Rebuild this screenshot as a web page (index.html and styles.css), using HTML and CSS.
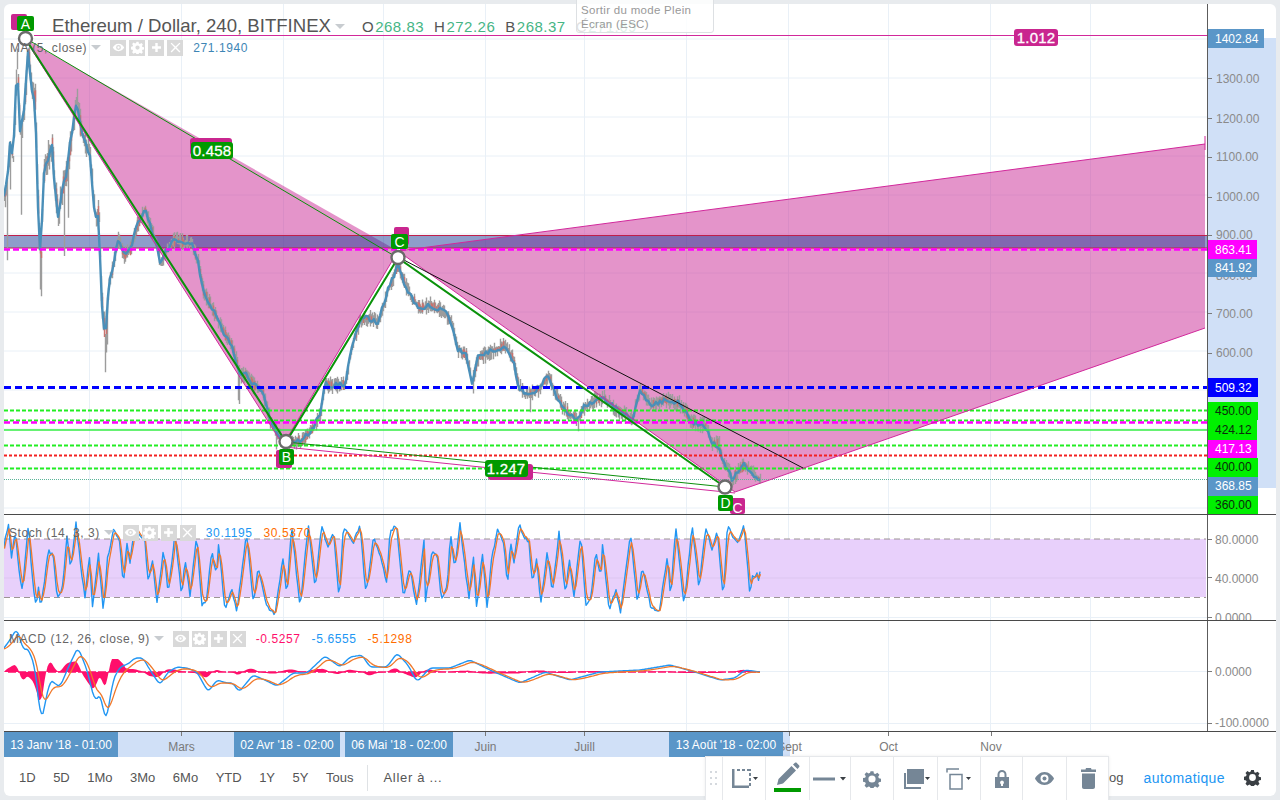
FILE: index.html
```html
<!DOCTYPE html>
<html lang="fr">
<head>
<meta charset="utf-8">
<title>Ethereum / Dollar</title>
<link rel="stylesheet" href="styles.css">
</head>
<body>
<svg class="defs" width="0" height="0" aria-hidden="true">
  <symbol id="i-eye" viewBox="0 0 16 16"><path fill="#fff" d="M8 3.5C4.6 3.5 2 6 1 8c1 2 3.6 4.500 7 4.500S14 10 15 8c-1-2-3.600-4.500-7-4.500zm0 7.500a3 3 0 1 1 0-6 3 3 0 0 1 0 6z"/><circle cx="8" cy="8" r="1.400" fill="#fff"/></symbol>
  <symbol id="i-gear" viewBox="0 0 16 16"><path fill="#fff" fill-rule="evenodd" d="M6.700 1h2.600l.4 2 1.300.6 1.800-1.100 1.800 1.800-1.100 1.800.6 1.300 2 .4v2.600l-2 .4-.6 1.300 1.100 1.800-1.800 1.800-1.800-1.100-1.300.6-.4 2H6.700l-.4-2-1.300-.6-1.800 1.100-1.800-1.800 1.100-1.800-.6-1.300-2-.4V7.200l2-.4.6-1.300-1.100-1.800 1.800-1.800 1.800 1.100 1.300-.6zM8 5.500a2.600 2.600 0 1 0 0 5.200 2.600 2.600 0 0 0 0-5.200z"/></symbol>
  <symbol id="i-plus" viewBox="0 0 16 16"><path fill="#fff" d="M6.500 2.500h3v4h4v3h-4v4h-3v-4h-4v-3h4z"/></symbol>
  <symbol id="i-x" viewBox="0 0 16 16"><path fill="#fff" d="M3.200 2 8 6.800 12.800 2 14 3.200 9.200 8 14 12.800 12.800 14 8 9.200 3.200 14 2 12.800 6.800 8 2 3.200z"/></symbol>
</svg>

<main class="app">
  <section class="row row-main">
    <div class="plot">
      <svg class="canvas" viewBox="4 4 1203 510" width="1203" height="510">
        <path class="grid" d="M4 39H1207M4 78H1207M4 117H1207M4 156H1207M4 195H1207M4 234H1207M4 273H1207M4 312H1207M4 351H1207M4 390H1207M4 429H1207M4 468H1207M4 508H1207M89.500 4V514M181.500 4V514M283.500 4V514M383.500 4V514M485.500 4V514M584.500 4V514M686.500 4V514M788.500 4V514M888.500 4V514M990.500 4V514M1090.500 4V514"/>
        <polygon class="zone" points="25,39 283,445 398,251"/>
        <polygon class="zone" points="398,251 1205,144 1205,328 735,492"/>
        <path class="pink-line" d="M1205 136V150"/>
        <rect class="band" x="4" y="235" width="1203" height="13"/>
        <path class="band-edge" d="M4 235.500H1207M4 248H1207"/>

        <path id="wicks" class="wicks"/>
        <path id="wicks-red" class="wicks-red"/>
        <path id="ma" class="ma"/>

        <path class="h-magenta" d="M4 249.500H1207"/>
        <path class="h-blue" d="M4 387.500H1207"/>
        <path class="h-green" d="M4 410.500H1207M4 420.500H1207M4 445.500H1207M4 468.500H1207"/>
        <path class="h-magenta" d="M4 422.500H1207"/>
        <path class="h-solid" d="M4 430H1207"/>
        <path class="h-red" d="M4 455.500H1207"/>
        <path class="h-dot" d="M4 479.500H1207"/>

        <path class="pink-line" d="M34 35.500H1207M25 39L283 445L398 251L735 492L1205 328M398 251L1205 144M285 447L735 493"/>
        <path class="black-line" d="M400 258L803 468"/>
        <path class="green-thin" d="M25 38L398 258M286 442L725 487"/>
        <path class="green-thick" d="M25 38L286 442L398 258L725 487"/>

        <g class="tag-pink">
          <rect x="11" y="14" width="16" height="16" rx="2"/>
          <rect x="394" y="227" width="15" height="18" rx="2"/>
          <rect x="276" y="450" width="16" height="18" rx="2"/>
          <rect x="730" y="498" width="15" height="16" rx="2"/>
          <rect x="190" y="138" width="42" height="17" rx="3"/>
          <rect x="488" y="464" width="45" height="16" rx="3"/>
          <rect x="1014" y="29" width="44" height="17" rx="3"/>
        </g>
        <g class="tag-green">
          <rect x="17" y="16" width="17" height="15" rx="2"/>
          <rect x="391" y="234" width="17" height="15" rx="2"/>
          <rect x="279" y="449" width="15" height="16" rx="2"/>
          <rect x="718" y="495" width="15" height="16" rx="2"/>
          <rect x="191" y="142" width="42" height="17" rx="3"/>
          <rect x="485" y="460" width="43" height="17" rx="3"/>
        </g>
        <g class="tag-text">
          <text x="25.500" y="29">A</text>
          <text x="399.500" y="247">C</text>
          <text x="286.500" y="462">B</text>
          <text x="725.500" y="508">D</text>
          <text x="737.500" y="513">C</text>
        </g>
        <g class="tag-num">
          <text x="212" y="156">0.458</text>
          <text x="506" y="474">1.247</text>
          <text x="1036" y="43">1.012</text>
        </g>
        <g class="node">
          <circle cx="25.500" cy="38.500" r="6.500"/>
          <circle cx="286" cy="441.500" r="6.500"/>
          <circle cx="398" cy="257.500" r="6.500"/>
          <circle cx="725" cy="487" r="6.500"/>
        </g>
      </svg>

      <div class="legend">
        <div class="title-row">
          <span class="title">Ethereum / Dollar, 240, BITFINEX</span>
          <span class="caret"></span>
          <span class="ohlc"><b>O</b><i>268.83</i></span>
          <span class="ohlc"><b>H</b><i>272.26</i></span>
          <span class="ohlc"><b>B</b><i>268.37</i></span>
          <span class="ohlc"><b>C</b><i>271.69</i></span>
        </div>
        <div class="study study-ma">
          <span class="study-name">MA (5, close)</span>
          <span class="caret small"></span>
          <span class="tools">
            <span class="tool"><svg width="13" height="13"><use href="#i-eye"/></svg></span>
            <span class="tool"><svg width="13" height="13"><use href="#i-gear"/></svg></span>
            <span class="tool"><svg width="13" height="13"><use href="#i-plus"/></svg></span>
            <span class="tool"><svg width="13" height="13"><use href="#i-x"/></svg></span>
          </span>
          <span class="val val-ma">271.1940</span>
        </div>
      </div>
    </div>
    <svg class="axis" viewBox="1208 4 68 510" width="68" height="510">
      <rect class="axis-fill" x="1208" y="38" width="68" height="450"/>
      <path class="tick" d="M1208 78.500h4M1208 118.500h4M1208 157.500h4M1208 197.500h4M1208 235.500h4M1208 275.500h4M1208 313.500h4M1208 353.500h4"/>
      <g class="axis-text">
        <text x="1216" y="83">1300.00</text>
        <text x="1216" y="123">1200.00</text>
        <text x="1216" y="161">1100.00</text>
        <text x="1216" y="201">1000.00</text>
        <text x="1216" y="239">900.00</text>
        <text x="1216" y="280">800.00</text>
        <text x="1216" y="318">700.00</text>
        <text x="1216" y="357">600.00</text>
      </g>
      <g class="axis-tag">
        <rect class="c-steel" x="1208" y="29" width="56" height="19"/><text class="on-dark" x="1215" y="43">1402.84</text>
        <rect class="c-magenta" x="1208" y="240" width="49" height="19"/><text class="on-dark" x="1215" y="254">863.41</text>
        <rect class="c-steel" x="1208" y="259" width="49" height="18"/><text class="on-dark" x="1215" y="272">841.92</text>
        <rect class="c-blue" x="1208" y="378" width="50" height="19"/><text class="on-dark" x="1215" y="392">509.32</text>
        <rect class="c-lime" x="1208" y="402" width="50" height="18"/><text class="on-lime" x="1215" y="415">450.00</text>
        <rect class="c-lime" x="1208" y="420" width="49" height="20"/><text class="on-lime" x="1215" y="434">424.12</text>
        <rect class="c-magenta" x="1208" y="440" width="49" height="18"/><text class="on-dark" x="1215" y="453">417.13</text>
        <rect class="c-lime" x="1208" y="458" width="50" height="19"/><text class="on-lime" x="1215" y="471">400.00</text>
        <rect class="c-steel" x="1208" y="477" width="50" height="19"/><text class="on-dark" x="1215" y="490">368.85</text>
        <rect class="c-lime" x="1208" y="496" width="50" height="18"/><text class="on-lime" x="1215" y="509">360.00</text>
      </g>
    </svg>
  </section>

  <section class="row row-stoch">
    <div class="plot">
      <svg class="canvas" viewBox="4 515 1203 105" width="1203" height="105">
        <path class="grid" d="M4 617.500H1207M89.500 515V620M181.500 515V620M283.500 515V620M383.500 515V620M485.500 515V620M584.500 515V620M686.500 515V620M788.500 515V620M888.500 515V620M990.500 515V620M1090.500 515V620"/>
        <rect class="stoch-band" x="4" y="539" width="1202" height="58"/>
        <path class="stoch-mid" d="M4 578H1206"/>
        <path class="stoch-dash" d="M4 539H1206M4 597.500H1206"/>
        <path id="st-k" class="line-blue"/>
        <path id="st-d" class="line-orange"/>
      </svg>
      <div class="legend">
        <div class="study study-st">
          <span class="study-name">Stoch (14, 3, 3)</span>
          <span class="caret small"></span>
          <span class="tools">
            <span class="tool"><svg width="13" height="13"><use href="#i-eye"/></svg></span>
            <span class="tool"><svg width="13" height="13"><use href="#i-gear"/></svg></span>
            <span class="tool"><svg width="13" height="13"><use href="#i-plus"/></svg></span>
            <span class="tool"><svg width="13" height="13"><use href="#i-x"/></svg></span>
          </span>
          <span class="val val-blue">30.1195</span>
          <span class="val val-orange">30.5370</span>
        </div>
      </div>
    </div>
    <svg class="axis" viewBox="1208 515 68 105" width="68" height="105">
      <path class="tick" d="M1208 539.500h4M1208 577.500h4M1208 617.500h4"/>
      <g class="axis-text">
        <text x="1215" y="544">80.0000</text>
        <text x="1215" y="583">40.0000</text>
        <text x="1215" y="622">0.0000</text>
      </g>
    </svg>
  </section>

  <section class="row row-macd">
    <div class="plot">
      <svg class="canvas" viewBox="4 621 1203 110" width="1203" height="110">
        <path class="grid" d="M4 671.500H1207M4 723.500H1207M89.500 621V731M181.500 621V731M283.500 621V731M383.500 621V731M485.500 621V731M584.500 621V731M686.500 621V731M788.500 621V731M888.500 621V731M990.500 621V731M1090.500 621V731"/>
        <path id="hist" class="hist"/>
        <path id="mc-base" class="hist-base"/>
        <path id="mc-a" class="line-blue"/>
        <path id="mc-b" class="line-orange"/>
      </svg>
      <div class="legend">
        <div class="study study-mc">
          <span class="study-name">MACD (12, 26, close, 9)</span>
          <span class="caret small"></span>
          <span class="tools">
            <span class="tool"><svg width="13" height="13"><use href="#i-eye"/></svg></span>
            <span class="tool"><svg width="13" height="13"><use href="#i-gear"/></svg></span>
            <span class="tool"><svg width="13" height="13"><use href="#i-plus"/></svg></span>
            <span class="tool"><svg width="13" height="13"><use href="#i-x"/></svg></span>
          </span>
          <span class="val val-pink">-0.5257</span>
          <span class="val val-blue">-5.6555</span>
          <span class="val val-orange">-5.1298</span>
        </div>
      </div>
    </div>
    <svg class="axis" viewBox="1208 621 68 110" width="68" height="110">
      <path class="tick" d="M1208 671.500h4M1208 723.500h4"/>
      <g class="axis-text">
        <text x="1215" y="676">0.0000</text>
        <text x="1215" y="727">-100.0000</text>
      </g>
    </svg>
  </section>

  <svg class="timeaxis" viewBox="4 732 1272 25" width="1272" height="25">
    <rect class="axis-fill" x="4" y="732" width="786" height="25"/>
    <path class="tick-v" d="M181.500 732v4M485.500 732v4M584.500 732v4M789.500 732v4M888.500 732v4M991.500 732v4"/>
    <g class="time-text">
      <text x="181.500" y="751">Mars</text>
      <text x="485.500" y="751">Juin</text>
      <text x="584.500" y="751">Juill</text>
      <text x="789.500" y="751">Sept</text>
      <text x="888.500" y="751">Oct</text>
      <text x="991" y="751">Nov</text>
    </g>
    <g class="time-tag">
      <rect x="4" y="732" width="114" height="25"/><text x="61" y="749">13 Janv '18 - 01:00</text>
      <rect x="234" y="732" width="106" height="25"/><text x="287" y="749">02 Avr '18 - 02:00</text>
      <rect x="345" y="732" width="108" height="25"/><text x="399" y="749">06 Mai '18 - 02:00</text>
      <rect x="669" y="732" width="114" height="25"/><text x="726" y="749">13 Août '18 - 02:00</text>
    </g>
  </svg>

  <footer class="bar">
    <nav class="ranges">
      <span>1D</span><span>5D</span><span>1Mo</span><span>3Mo</span><span>6Mo</span><span>YTD</span><span>1Y</span><span>5Y</span><span>Tous</span>
    </nav>
    <span class="goto">Aller à ...</span>
    <div class="bar-right">
      <span class="log">Log</span>
      <span class="auto">automatique</span>
      <svg class="bar-gear" width="17" height="17" viewBox="0 0 16 16"><path fill="#3a3f44" fill-rule="evenodd" d="M6.700 1h2.600l.4 2 1.300.6 1.800-1.100 1.800 1.800-1.100 1.800.6 1.300 2 .4v2.600l-2 .4-.6 1.300 1.100 1.800-1.800 1.800-1.800-1.100-1.300.6-.4 2H6.700l-.4-2-1.300-.6-1.800 1.100-1.800-1.800 1.100-1.800-.6-1.300-2-.4V7.200l2-.4.6-1.300-1.100-1.800 1.800-1.800 1.800 1.100 1.300-.6zM8 4.800a3.200 3.200 0 1 0 0 6.400 3.200 3.200 0 0 0 0-6.400z"/></svg>
    </div>
  </footer>
</main>

<aside class="tooltip">Sortir du mode Plein<br>Écran (ESC)</aside>

<aside class="toolbar">
  <div class="tb tb-grip"><svg width="8" height="18"><path fill="#d5d9de" d="M0 1h2v2H0zM5 1h2v2H5zM0 7h2v2H0zM5 7h2v2H5zM0 13h2v2H0zM5 13h2v2H5z"/></svg></div>
  <div class="tb tb-43"><svg width="28" height="24" viewBox="0 0 28 24"><path fill="#758696" d="M2 2h2.500v16.500H19V21H2z"/><path fill="#758696" d="M7 2h3v2H7zM12 2h3v2h-3zM17 2h4v2h-4zM19 6h2v3h-2zM19 11h2v3h-2zM19 16h2v3h-2z"/><path fill="#3a3f44" d="M23 10h5l-2.500 3z"/></svg></div>
  <div class="tb tb-44 tb-active"><svg width="24" height="24" viewBox="0 0 24 24"><path fill="#758696" d="M1 23l1.500-6L15.500 4l4.500 4.500L7 21.500zM17 2.500 19 .8c.5-.4 1.200-.4 1.600 0l2.600 2.600c.4.400.4 1.100 0 1.500L21.500 7z"/></svg></div>
  <div class="tb tb-41"><svg width="34" height="10" viewBox="0 0 34 10"><path fill="#758696" d="M0 3.500h22v3H0z"/><path fill="#3a3f44" d="M27 3h6l-3 3.500z"/></svg></div>
  <div class="tb tb-43"><svg width="18" height="18" viewBox="0 0 16 16"><path fill="#758696" fill-rule="evenodd" d="M6.700 1h2.600l.4 2 1.300.6 1.800-1.100 1.800 1.800-1.100 1.800.6 1.300 2 .4v2.600l-2 .4-.6 1.300 1.100 1.800-1.800 1.800-1.800-1.100-1.300.6-.4 2H6.700l-.4-2-1.300-.6-1.800 1.100-1.800-1.800 1.100-1.800-.6-1.300-2-.4V7.200l2-.4.6-1.300-1.100-1.800 1.800-1.800 1.800 1.100 1.300-.6zM8 4.800a3.200 3.200 0 1 0 0 6.400 3.200 3.200 0 0 0 0-6.400z"/></svg></div>
  <div class="tb tb-44"><svg width="28" height="22" viewBox="0 0 28 22"><path fill="#758696" d="M5 1h17v15H5z"/><path fill="#758696" d="M2 5h2v14h15v2H2z"/><path fill="#3a3f44" d="M23 9h5l-2.500 3z"/></svg></div>
  <div class="tb tb-43"><svg width="26" height="22" viewBox="0 0 26 22"><path fill="none" stroke="#758696" stroke-width="1.500" d="M4 6.500h12v14.500H4zM1 4.500V1h12"/><path fill="#3a3f44" d="M20 9h5l-2.500 3z"/></svg></div>
  <div class="tb tb-42"><svg width="16" height="20" viewBox="0 0 16 20"><path fill="#758696" fill-rule="evenodd" d="M3.500 8V5.500a4.500 4.500 0 0 1 9 0V8H15v11H1V8zm2 0h5V5.500a2.500 2.500 0 0 0-5 0zM8 11.500a2 2 0 0 0-1 3.700V17h2v-1.800a2 2 0 0 0-1-3.700z"/></svg></div>
  <div class="tb tb-44"><svg width="19" height="13" viewBox="0 0 19 13"><path fill="#758696" fill-rule="evenodd" d="M9.500 0C5 0 1.500 3.500 0 6.500 1.500 9.500 5 13 9.500 13s8-3.500 9.500-6.500C17.500 3.500 14 0 9.500 0zm0 2.500a4 4 0 1 1 0 8 4 4 0 0 1 0-8z"/><circle cx="9.500" cy="6.500" r="2" fill="#758696"/></svg></div>
  <div class="tb tb-42 tb-last"><svg width="15" height="21" viewBox="0 0 15 21"><path fill="#758696" d="M5 0h5l.5 1.500H15V4H0V1.500h4.500zM1 5.500h13V19c0 1-.8 2-2 2H3c-1.200 0-2-1-2-2z"/></svg></div>
</aside>

<script src="chart.js"></script>
</body>
</html>
```

FILE: styles.css
```css
* { box-sizing: border-box; }

html, body { margin: 0; height: 100%; }

body {
  position: relative;
  width: 1280px;
  height: 800px;
  overflow: hidden;
  background: #e8ebee;
  font-family: "Liberation Sans", Arial, sans-serif;
  color: #555;
}

.defs { position: absolute; }

.app {
  width: 1272px;
  height: 792px;
  margin: 4px;
  background: #fff;
  border-radius: 6px;
  overflow: hidden;
  display: flex;
  flex-direction: column;
}

.row { display: flex; flex: none; border-bottom: 1px solid #4a4a4a; }
.row-main { height: 511px; }
.row-stoch { height: 106px; }
.row-macd { height: 111px; }

.plot {
  position: relative;
  width: 1204px;
  flex: none;
  border-right: 1px solid #5c5c5c;
  overflow: hidden;
}

.canvas, .axis, .timeaxis { display: block; flex: none; }

/* chart drawing */
.grid { stroke: #e9f0f7; stroke-width: 1; fill: none; }
.zone { fill: #c92a96; fill-opacity: .5; }
.band { fill: #1e3c96; fill-opacity: .5; }
.band-edge { stroke: #c01f4a; stroke-width: 1; fill: none; }
.wicks { stroke: #9c9c9c; stroke-width: 1.400; fill: none; }
.wicks-red { stroke: #c9736f; stroke-width: 1.400; fill: none; }
.ma { stroke: #4a8fb9; stroke-width: 2.400; fill: none; stroke-linejoin: round; }

.h-magenta { stroke: #ff00ff; stroke-width: 2.500; stroke-dasharray: 6 3; fill: none; }
.h-blue { stroke: #0000ff; stroke-width: 3; stroke-dasharray: 7 4; fill: none; }
.h-green { stroke: #22ee22; stroke-width: 2; stroke-dasharray: 4 2; fill: none; }
.h-solid { stroke: #33ee44; stroke-width: 1.500; fill: none; }
.h-red { stroke: #f42020; stroke-width: 2; stroke-dasharray: 3 2; fill: none; }
.h-dot { stroke: #5bb598; stroke-width: 1; stroke-dasharray: 1 1; fill: none; }

.pink-line { stroke: #d1289b; stroke-width: 1; fill: none; }
.black-line { stroke: #111; stroke-width: 1; fill: none; }
.green-thin { stroke: #0b8f0b; stroke-width: 1; fill: none; }
.green-thick { stroke: #0a920a; stroke-width: 2; fill: none; }

.tag-pink rect { fill: #c9268f; }
.tag-green rect { fill: #009900; }
.tag-text text {
  fill: #fff;
  font-size: 14px;
  text-anchor: middle;
}
.tag-num text {
  fill: #fff;
  font-size: 15px;
  text-anchor: middle;
  letter-spacing: .2px;
  stroke: #fff;
  stroke-width: .3px;
}
.node circle { fill: #fff; stroke: #6b6b6b; stroke-width: 2.400; }

/* legend */
.legend { position: absolute; left: 0; top: 0; }

.title-row {
  display: flex;
  align-items: center;
  height: 26px;
  margin-top: 9px;
  padding-left: 48px;
  white-space: nowrap;
}
.title { font-size: 18.600px; color: #555; }
.caret {
  width: 0;
  height: 0;
  margin-left: 4px;
  margin-right: 17px;
  border-left: 5px solid transparent;
  border-right: 5px solid transparent;
  border-top: 5px solid #c8ccd0;
}
.caret.small { margin-right: 9px; }
.ohlc { font-size: 15px; margin-right: 10px; letter-spacing: .5px; }
.ohlc b { font-weight: 400; color: #555; margin-right: 1px; }
.ohlc i { font-style: normal; color: #46b585; }

.study {
  display: flex;
  align-items: center;
  height: 17px;
  padding-left: 6px;
  white-space: nowrap;
}
.study-st { margin-top: 9px; padding-left: 5px; }
.study-mc { margin-top: 9px; padding-left: 5px; }
.study-name { font-size: 12px; color: #666; letter-spacing: .55px; }

.tools { display: flex; gap: 3px; margin-right: 10px; }
.tool {
  width: 16px;
  height: 16px;
  display: flex;
  align-items: center;
  justify-content: center;
  background: #d9d9d9;
}
.tool svg { display: block; }

.val { font-size: 12px; margin-right: 11px; letter-spacing: .6px; }
.val-ma { color: #3d85b5; }
.val-blue { color: #2196f3; }
.val-orange { color: #ff6d00; }
.val-pink { color: #ff0f6b; }

/* axes */
.axis-fill { fill: #d0e0f7; }
.tick, .tick-v { stroke: #7a7a7a; stroke-width: 1; fill: none; }
.axis-text text { fill: #8a8a8a; font-size: 12px; }
.axis-tag text { font-size: 12px; }
.on-dark { fill: #fff; }
.on-lime { fill: #0c2a0c; }
.c-steel { fill: #5a96c8; }
.c-magenta { fill: #ff00ff; }
.c-blue { fill: #0000ff; }
.c-lime { fill: #00f000; }

.time-text text { fill: #7a7a7a; font-size: 12px; text-anchor: middle; }
.time-tag rect { fill: #5a96c8; }
.time-tag text { fill: #fff; font-size: 12px; text-anchor: middle; }

/* panes */
.stoch-band { fill: #e8d0fb; }
.stoch-mid { stroke: #ddc6f0; stroke-width: 1; fill: none; }
.stoch-dash { stroke: #9c9494; stroke-width: 1; stroke-dasharray: 6 4; fill: none; }
.line-blue { stroke: #2196f3; stroke-width: 1.400; fill: none; stroke-linejoin: round; }
.line-orange { stroke: #f0782a; stroke-width: 1.300; fill: none; stroke-linejoin: round; }
.hist { fill: #ff0f6b; stroke: none; }
.hist-base { stroke: #ff0f6b; stroke-width: 1.500; stroke-dasharray: 8 2; fill: none; }

/* bottom bar */
.bar {
  flex: 1;
  display: flex;
  align-items: center;
  padding-left: 15px;
  padding-top: 2px;
  font-size: 13px;
  color: #555;
}
.ranges {
  display: flex;
  gap: 17.500px;
  padding-right: 14px;
  height: 26px;
  align-items: center;
  border-right: 1px solid #dfe2e5;
}
.goto { margin-left: 15px; letter-spacing: .7px; }
.bar-right {
  margin-left: auto;
  display: flex;
  align-items: center;
  padding-right: 15px;
}
.log { font-size: 13px; margin-right: 20px; }
.auto { font-size: 14px; color: #2196f3; margin-right: 19px; letter-spacing: .4px; }
.bar-gear { display: block; }

/* overlays */
.tooltip {
  position: absolute;
  left: 576px;
  top: -6px;
  width: 138px;
  height: 39px;
  padding: 8px 4px 0;
  background: rgba(255, 255, 255, .82);
  border: 1px solid #dde0e3;
  border-radius: 3px;
  font-size: 11.500px;
  line-height: 14px;
  letter-spacing: .3px;
  color: #999;
}

.toolbar {
  position: absolute;
  left: 705px;
  top: 756px;
  width: 404px;
  height: 44px;
  display: flex;
  background: #fff;
  border: 1px solid #e6e8eb;
  border-bottom: 0;
  box-shadow: 0 0 3px rgba(0, 0, 0, .08);
}
.tb {
  flex: none;
  display: flex;
  align-items: center;
  justify-content: center;
  height: 100%;
  border-right: 1px solid #e6e8eb;
}
.tb-last { border-right: 0; }
.tb-grip { width: 17px; }
.tb-41 { width: 41px; }
.tb-42 { width: 42px; }
.tb-43 { width: 43px; }
.tb-44 { width: 44px; }
.tb-active { position: relative; }
.tb-active::after {
  content: "";
  position: absolute;
  left: 8px;
  right: 8px;
  bottom: 8px;
  height: 4px;
  background: #009900;
}
.tb-active svg { margin-bottom: 10px; }
```

FILE: chart.js
```js
(function () {
  var seed = 20180813;
  function rnd() {
    seed = (seed * 1664525 + 1013904223) >>> 0;
    return seed / 4294967296;
  }
  function interp(pts, x) {
    for (var i = 1; i < pts.length; i++) {
      if (x <= pts[i][0]) {
        var a = pts[i - 1], b = pts[i];
        return a[1] + (b[1] - a[1]) * (x - a[0]) / (b[0] - a[0]);
      }
    }
    return pts[pts.length - 1][1];
  }
  function set(id, d) { document.getElementById(id).setAttribute('d', d); }
  function toPath(a) {
    return 'M' + a.map(function (p) { return p[0].toFixed(1) + ' ' + p[1].toFixed(1); }).join('L');
  }

  var price = [[4,200],[7,180],[10,143],[13,160],[17,57],[20,133],[24,110],[28,50],[32,90],[35,100],[37,170],[39,240],[41,255],[43,177],[47,160],[52,143],[55,190],[58,213],[63,185],[67,170],[72,130],[77,97],[80,125],[82,133],[86,145],[90,153],[93,195],[95,215],[99,215],[101,290],[105,340],[109,280],[112,270],[118,240],[124,255],[130,250],[137,225],[145,210],[150,225],[155,240],[160,262],[167,250],[175,240],[185,243],[192,245],[198,262],[203,290],[210,305],[218,320],[225,335],[232,345],[240,375],[247,375],[253,385],[262,390],[270,420],[278,435],[285,443],[295,442],[303,440],[313,428],[320,415],[325,385],[335,385],[345,385],[352,345],[360,320],[368,318],[378,322],[388,290],[398,265],[405,285],[412,298],[420,308],[430,305],[445,312],[452,325],[458,350],[466,355],[472,382],[478,358],[490,352],[505,345],[513,360],[518,385],[525,395],[532,392],[540,388],[548,375],[555,392],[561,405],[570,415],[578,420],[585,405],[595,400],[605,398],[613,407],[625,415],[632,420],[640,388],[650,405],[658,402],[665,400],[678,403],[686,412],[691,422],[705,425],[708,432],[712,443],[719,445],[722,460],[728,470],[732,480],[738,470],[745,465],[752,472],[757,478],[761,482]];
  var spikes = { 7: 70, 10: 45, 21: 80, 40: 30, 41: 30, 64: 70, 68: 45, 105: 25, 106: 25, 107: 20, 238: 30, 239: 30, 276: 12, 473: 10, 530: 12, 578: 8, 593: 6 };
  var wicks = '', reds = '', ma = [];
  for (var x = 4; x <= 760; x++) {
    var y = interp(price, x);
    var early = x < 110 ? 16 : 8;
    var up = 1 + rnd() * early;
    var dn = 1 + rnd() * early + (spikes[x] || 0);
    wicks += 'M' + (x + .5) + ' ' + (y - up).toFixed(1) + 'V' + (y + dn).toFixed(1);
    if (rnd() < .3) {
      reds += 'M' + (x + .5) + ' ' + (y - up * .6).toFixed(1) + 'V' + (y + up * .6).toFixed(1);
    }
    if (x % 2 === 0) ma.push([x, y + (rnd() - .5) * (x < 110 ? 8 : 5.500)]);
  }
  set('wicks', wicks);
  set('wicks-red', reds);
  set('ma', toPath(ma));

  /* Stochastic pane: shape read off the reference (3x crop coordinates) */
  var raw = [[12,110],[25,40],[35,150],[45,60],[60,210],[68,240],[85,40],[95,180],[108,295],[115,230],[122,290],[135,200],[145,120],[160,140],[172,270],[190,220],[200,70],[212,180],[228,40],[245,190],[255,265],[268,140],[278,295],[295,130],[310,300],[322,150],[340,60],[360,100],[370,230],[380,90],[390,160],[405,40],[420,80],[435,100],[445,220],[458,145],[470,285],[490,120],[505,250],[525,65],[545,260],[555,140],[570,260],[590,70],[605,285],[620,270],[635,120],[650,200],[655,95],[675,300],[695,240],[710,305],[740,70],[760,280],[775,170],[800,290],[825,310],[850,140],[860,260],[875,50],[900,290],[925,45],[945,235],[965,50],[985,120],[1000,60],[1018,270],[1030,50],[1060,100],[1080,45],[1098,255],[1120,85],[1140,130],[1160,220],[1170,60],[1190,50],[1210,260],[1230,175],[1250,290],[1275,60]];
  var shape = raw.map(function (p) { return [p[0] / 3, 510 + p[1] / 3]; });
  var span = shape[shape.length - 1][0] - shape[0][0];
  var k = [], d = [], sig = 550;
  for (var sx = 4; sx <= 760; sx += 1.5) {
    var off = sx < 425 ? sx : shape[0][0] + ((sx - 425 + 37) % span);
    var val = interp(shape, off) + (rnd() - .5) * 4;
    if (sx > 752) val = 575 + (sx - 752) * 2 * (rnd() - .3);
    sig += (val - sig) * .6;
    k.push([sx, val]);
    d.push([sx + .5, sig]);
  }
  set('st-k', toPath(k));
  set('st-d', toPath(d));

  /* MACD pane */
  var mac = [[4,648],[10,640],[17,628],[23,650],[28,648],[35,667],[41,723],[50,680],[60,687],[68,668],[78,647],[87,670],[95,702],[100,693],[106,723],[113,680],[120,667],[128,664],[135,658],[143,658],[150,670],[160,685],[168,672],[177,667],[187,668],[197,672],[208,692],[217,680],[227,683],[233,683],[239,692],[253,675],[265,680],[277,686],[293,673],[307,673],[325,656],[340,667],[350,657],[362,655],[370,667],[387,667],[397,653],[408,665],[417,682],[430,668],[450,668],[470,660],[490,670],[520,683],[545,672],[570,680],[600,672],[640,670],[670,665],[695,672],[720,680],[735,678],[745,670],[760,672]];
  var a = [], b = [], top = [], ema = interp(mac, 4);
  for (var px = 4; px <= 760; px += 1.5) {
    var m = (interp(mac, px - 2) + interp(mac, px) + interp(mac, px + 2)) / 3;
    ema += (m - ema) * .24;
    a.push([px, m]);
    b.push([px, ema + .8]);
    var gain = px < 125 ? 1.1 : .75;
    var h = Math.max(-13, Math.min(28, (m - ema) * gain));
    top.push([px, 672 + h]);
  }
  set('mc-a', toPath(a));
  set('mc-b', toPath(b));
  set('hist', toPath(top) + 'L760 672L4 672Z');
  set('mc-base', 'M8 672H760');
}());
```
